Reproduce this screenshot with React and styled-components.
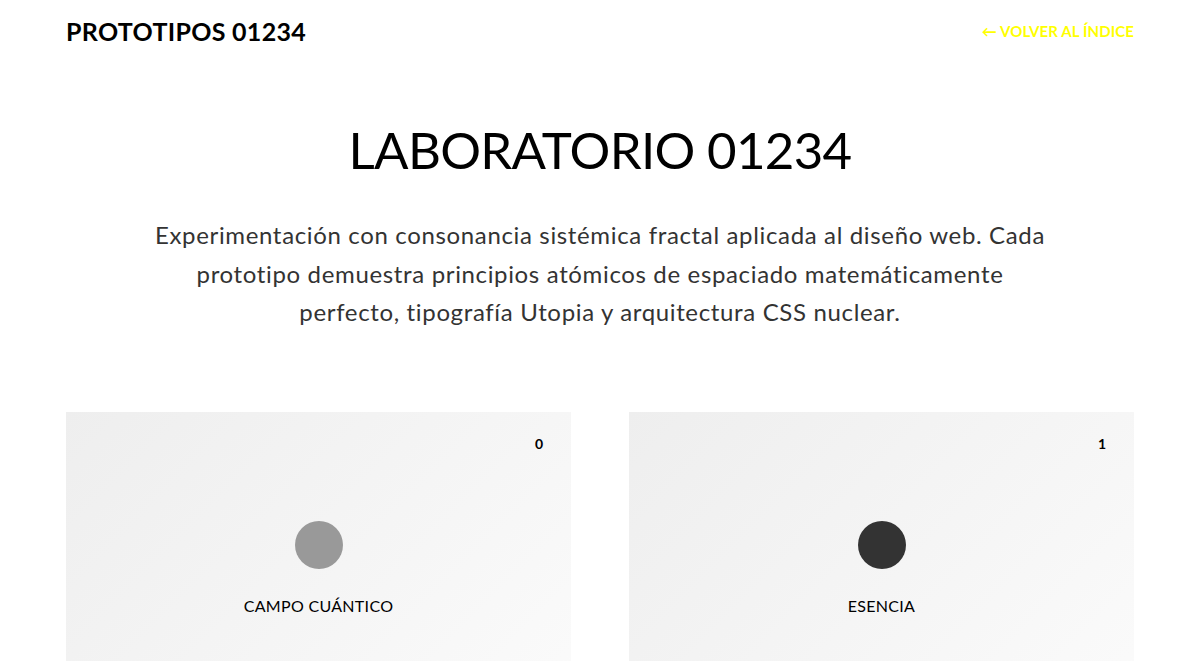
import React from 'react';
import styled, { createGlobalStyle } from 'styled-components';

const GlobalStyle = createGlobalStyle`
  html, body {
    margin: 0;
    padding: 0;
    background: #fff;
  }
  body {
    font-family: Lato, "Noto Sans", "Liberation Sans", sans-serif;
    color: #000;
  }
`;

const Page = styled.div`
  max-width: 1068px;
  margin: 0 auto;
  padding: 0 66px;
`;

const TopBar = styled.header`
  display: flex;
  justify-content: space-between;
  align-items: center;
  height: 61px;
`;

const Brand = styled.div`
  font-size: 25px;
  font-weight: 700;
  letter-spacing: 0.3px;
  color: #000;
`;

const BackLink = styled.a`
  font-size: 15px;
  font-weight: 700;
  color: #ffff00;
  text-decoration: none;
  letter-spacing: 0.1px;
`;

const Hero = styled.section`
  display: flex;
  flex-direction: column;
  align-items: center;
  text-align: center;
  padding-top: 56px;
`;

const Title = styled.h1`
  margin: 0;
  font-size: 51px;
  font-weight: 400;
  line-height: 66px;
  letter-spacing: -0.7px;
`;

const Intro = styled.p`
  margin: 33px 0 0;
  max-width: 910px;
  font-size: 24px;
  line-height: 38.5px;
  letter-spacing: 0.65px;
  color: #333;
`;

const Grid = styled.div`
  display: grid;
  grid-template-columns: 1fr 1fr;
  gap: 58px;
  margin-top: 80px;
`;

const Card = styled.article`
  position: relative;
  height: 300px;
  background: linear-gradient(135deg, #eeeeee 0%, #fbfbfb 100%);
  display: flex;
  flex-direction: column;
  align-items: center;
  padding-top: 109px;
  box-sizing: border-box;
`;

const Index = styled.span`
  position: absolute;
  top: 23px;
  right: 28px;
  font-size: 14px;
  font-weight: 700;
`;

const Dot = styled.div`
  width: 48px;
  height: 48px;
  border-radius: 50%;
  background: ${p => p.$tone};
`;

const Label = styled.div`
  margin-top: 27px;
  font-size: 16px;
  letter-spacing: 0.3px;
`;

const prototypes = [
  { name: 'CAMPO CUÁNTICO', tone: '#999999' },
  { name: 'ESENCIA', tone: '#333333' },
];

export default function App() {
  return (
    <>
      <GlobalStyle />
      <Page>
        <TopBar>
          <Brand>PROTOTIPOS 01234</Brand>
          <BackLink href="#">← VOLVER AL ÍNDICE</BackLink>
        </TopBar>
        <Hero>
          <Title>LABORATORIO 01234</Title>
          <Intro>
            Experimentación con consonancia sistémica fractal aplicada al diseño web. Cada
            prototipo demuestra principios atómicos de espaciado matemáticamente
            perfecto, tipografía Utopia y arquitectura CSS nuclear.
          </Intro>
        </Hero>
        <Grid>
          {prototypes.map((p, i) => (
            <Card key={p.name}>
              <Index>{i}</Index>
              <Dot $tone={p.tone} />
              <Label>{p.name}</Label>
            </Card>
          ))}
        </Grid>
      </Page>
    </>
  );
}
